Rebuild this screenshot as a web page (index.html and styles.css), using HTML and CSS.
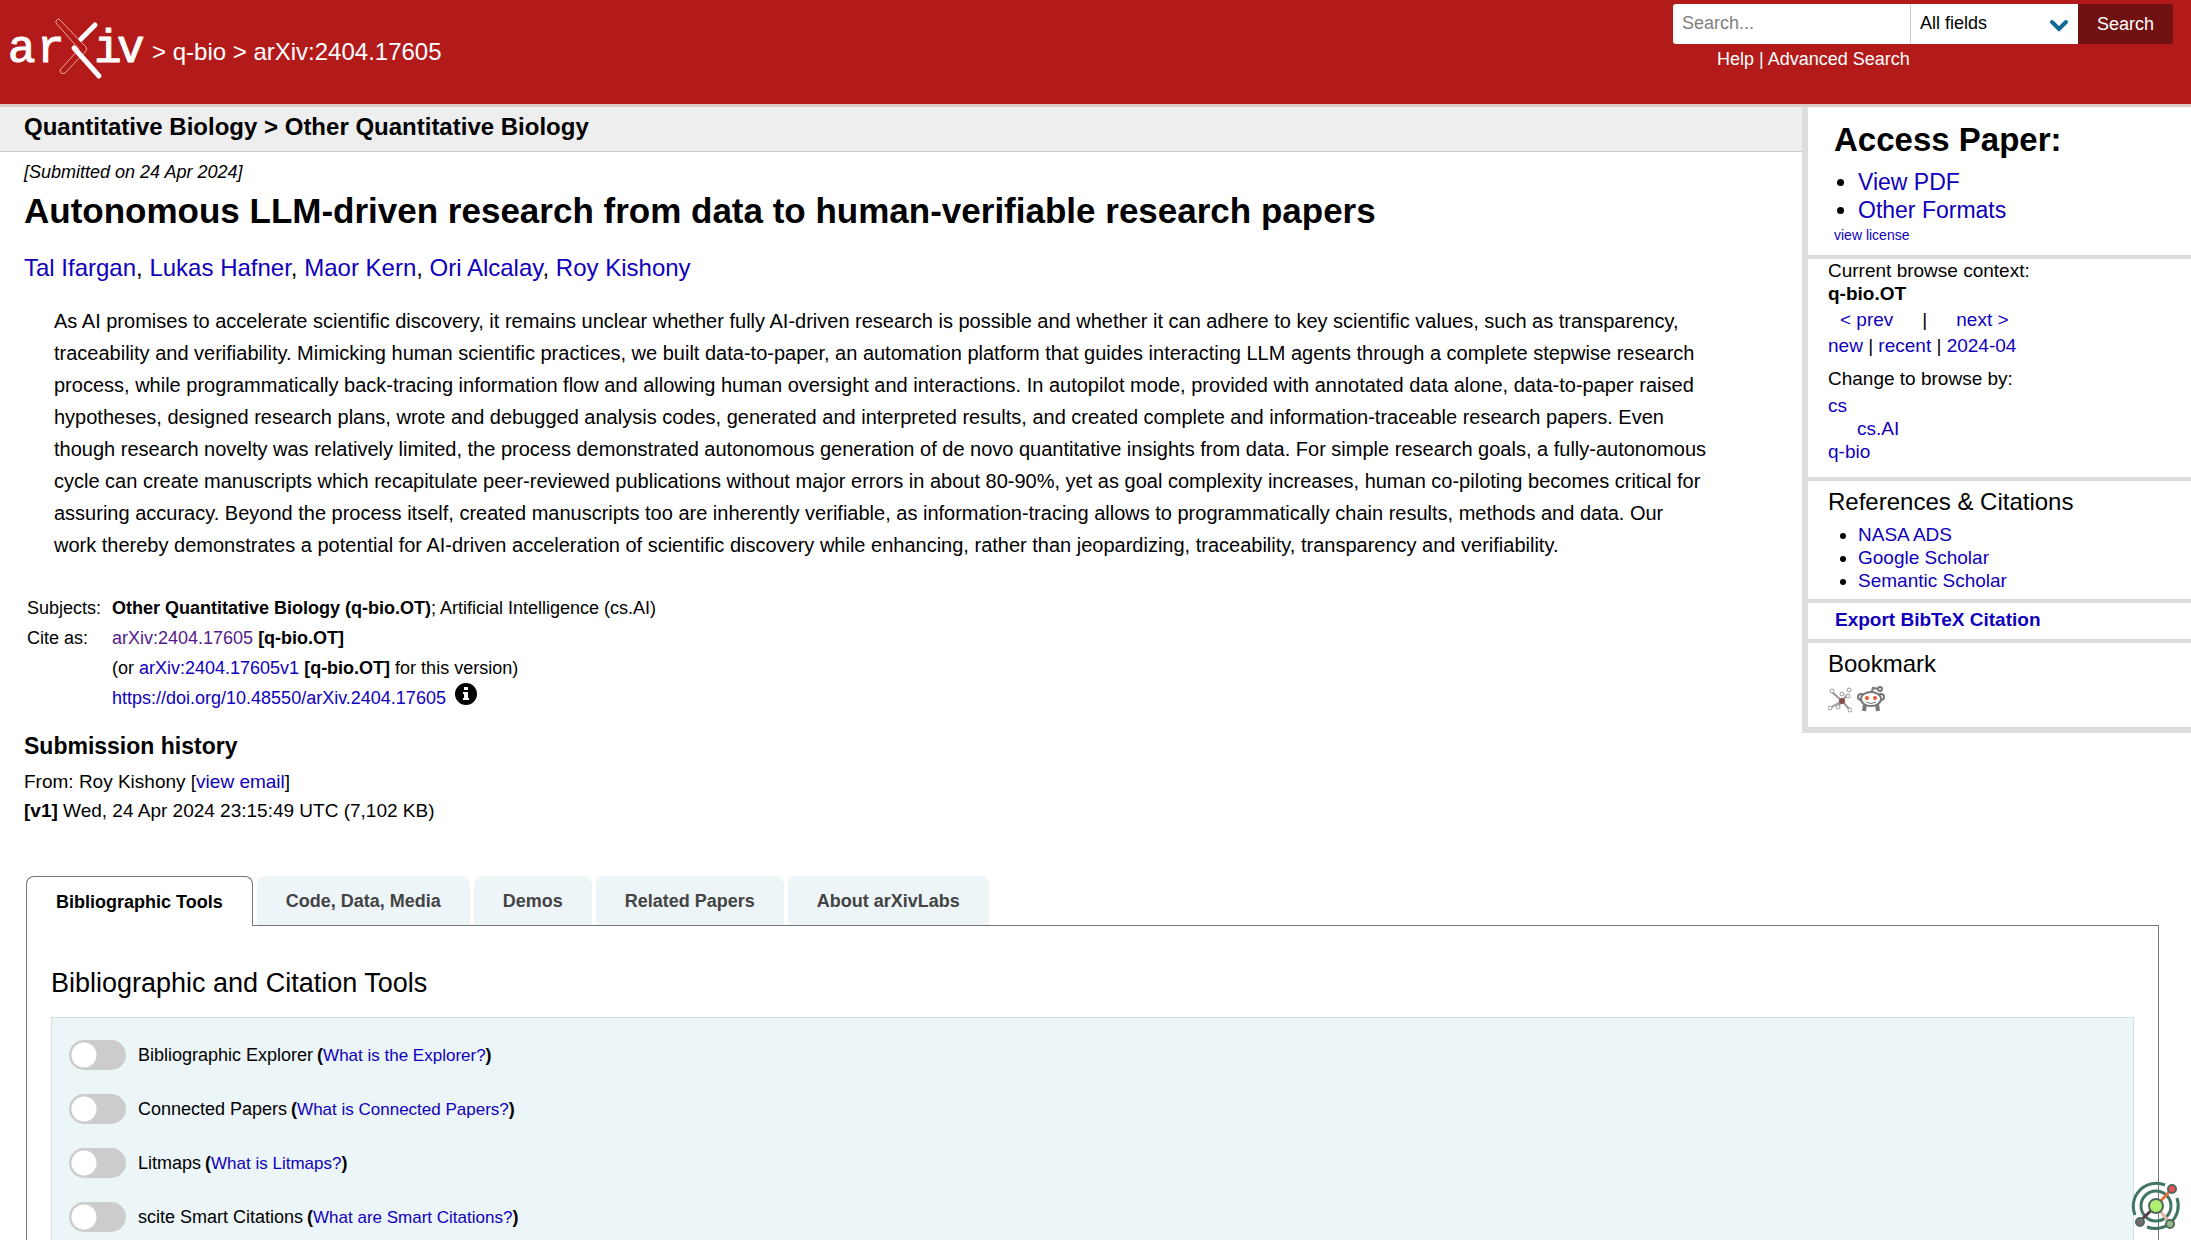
FILE: index.html
```html
<!DOCTYPE html>
<html lang="en">
<head>
<meta charset="utf-8">
<meta name="viewport" content="width=device-width, initial-scale=1">
<title>[2404.17605] Autonomous LLM-driven research from data to human-verifiable research papers</title>
<link rel="stylesheet" href="styles.css">
</head>
<body>
<header class="site-header">
  <div class="crumbs">
    <a class="logo" href="#" aria-label="arXiv home">
      <svg width="140" height="64" viewBox="0 0 140 64" aria-hidden="true">
        <g class="logo-text"><text x="0 29" y="44">ar</text><text x="86 109" y="44">iv</text></g>
        <path d="M48 3 Q49 1 51 1 L78 29 Q79 31 78 33 L57 55 Q52 57 52 52 L71 31 L48 5 Z" fill="#b31b1b" stroke="#f3a598" stroke-width="1"/>
        <path d="M87 7 L73 21 M66 30 L91 58" fill="none" stroke="#fff" stroke-width="5" stroke-linecap="round"/>
      </svg>
    </a>
    <nav class="trail"><span>&gt;</span> <a href="#">q-bio</a> <span>&gt;</span> <a href="#">arXiv:2404.17605</a></nav>
  </div>
  <form class="search">
    <div class="search-row">
      <input class="search-input" type="text" placeholder="Search..." aria-label="Search term">
      <div class="search-field">
        <select aria-label="Field to search"><option>All fields</option></select>
        <svg class="chevron" width="20" height="13" viewBox="0 0 20 13" aria-hidden="true"><path d="M3 3 L10 10 L17 3" fill="none" stroke="#0f6a94" stroke-width="4" stroke-linecap="round"/></svg>
      </div>
      <button class="search-button" type="submit">Search</button>
    </div>
    <p class="search-help"><a href="#">Help</a> | <a href="#">Advanced Search</a></p>
  </form>
</header>

<div class="layout">
  <main class="paper">
    <div class="subject-bar">Quantitative Biology &gt; Other Quantitative Biology</div>
    <div class="paper-body">
      <p class="dateline">[Submitted on 24 Apr 2024]</p>
      <h1 class="title">Autonomous LLM-driven research from data to human-verifiable research papers</h1>
      <p class="authors"><a href="#">Tal Ifargan</a>, <a href="#">Lukas Hafner</a>, <a href="#">Maor Kern</a>, <a href="#">Ori Alcalay</a>, <a href="#">Roy Kishony</a></p>
      <blockquote class="abstract">As AI promises to accelerate scientific discovery, it remains unclear whether fully AI-driven research is possible and whether it can adhere to key scientific values, such as transparency, traceability and verifiability. Mimicking human scientific practices, we built data-to-paper, an automation platform that guides interacting LLM agents through a complete stepwise research process, while programmatically back-tracing information flow and allowing human oversight and interactions. In autopilot mode, provided with annotated data alone, data-to-paper raised hypotheses, designed research plans, wrote and debugged analysis codes, generated and interpreted results, and created complete and information-traceable research papers. Even though research novelty was relatively limited, the process demonstrated autonomous generation of de novo quantitative insights from data. For simple research goals, a fully-autonomous cycle can create manuscripts which recapitulate peer-reviewed publications without major errors in about 80-90%, yet as goal complexity increases, human co-piloting becomes critical for assuring accuracy. Beyond the process itself, created manuscripts too are inherently verifiable, as information-tracing allows to programmatically chain results, methods and data. Our work thereby demonstrates a potential for AI-driven acceleration of scientific discovery while enhancing, rather than jeopardizing, traceability, transparency and verifiability.</blockquote>
      <table class="meta">
        <tr><th scope="row">Subjects:</th><td><b>Other Quantitative Biology (q-bio.OT)</b>; Artificial Intelligence (cs.AI)</td></tr>
        <tr><th scope="row">Cite as:</th><td><a class="visited" href="#">arXiv:2404.17605</a> <b>[q-bio.OT]</b></td></tr>
        <tr><th></th><td>(or <a href="#">arXiv:2404.17605v1</a> <b>[q-bio.OT]</b> for this version)</td></tr>
        <tr><th></th><td><span class="doi"><a href="#">https://doi.org/10.48550/arXiv.2404.17605</a>
          <svg width="22" height="22" viewBox="0 0 22 22" role="img" aria-label="Focus to learn more"><circle cx="11" cy="11" r="11" fill="#000"/><path d="M9 4h4v3H9zM8 9h5v6h1v2H8v-2h1v-4H8z" fill="#fff"/></svg></span></td></tr>
      </table>
      <h2 class="history-title">Submission history</h2>
      <p class="history">From: Roy Kishony [<a href="#">view email</a>]<br><b>[v1]</b> Wed, 24 Apr 2024 23:15:49 UTC (7,102 KB)</p>
    </div>
  </main>

  <aside class="sidebar">
    <section class="access">
      <h2>Access Paper:</h2>
      <ul>
        <li><a href="#">View PDF</a></li>
        <li><a href="#">Other Formats</a></li>
      </ul>
      <a class="license" href="#">view license</a>
    </section>
    <section class="browse">
      <div>Current browse context:</div>
      <div><b>q-bio.OT</b></div>
      <div class="prevnext"><a href="#">&lt; prev</a><span>|</span><a href="#">next &gt;</a></div>
      <div class="list-links"><a href="#">new</a> | <a href="#">recent</a> | <a href="#">2024-04</a></div>
      <div class="change">Change to browse by:</div>
      <div><a href="#">cs</a></div>
      <div class="sub"><a href="#">cs.AI</a></div>
      <div><a href="#">q-bio</a></div>
    </section>
    <section class="refs">
      <h3>References &amp; Citations</h3>
      <ul>
        <li><a href="#">NASA ADS</a></li>
        <li><a href="#">Google Scholar</a></li>
        <li><a href="#">Semantic Scholar</a></li>
      </ul>
    </section>
    <section class="export"><button type="button">Export BibTeX Citation</button></section>
    <section class="bookmark">
      <h3>Bookmark</h3>
      <div class="bookmark-icons">
        <a href="#" aria-label="Bookmark on BibSonomy">
          <svg width="24" height="28" viewBox="0 0 24 28"><g fill="none" stroke="#999" stroke-width="2"><path d="M4 7 L14 16 L22 25 M2 23 L14 16 L19 10 M14 16 L10 22"/><g fill="#fff" stroke-width="1"><circle cx="4" cy="6" r="2"/><circle cx="22" cy="25" r="2"/><circle cx="2" cy="23" r="2"/><circle cx="10" cy="22" r="2"/><circle cx="14" cy="9" r="2"/><circle cx="21" cy="5" r="2"/><circle cx="20" cy="11" r="2"/></g></g><circle cx="14" cy="16" r="3" fill="#8a4a4a"/></svg>
        </a>
        <a href="#" aria-label="Bookmark on Reddit">
          <svg width="28" height="28" viewBox="0 0 28 28"><g fill="#fff" stroke="#777" stroke-width="2"><path d="M14 9 L16 3 L22 4" fill="none"/><circle cx="23" cy="4" r="2"/><circle cx="4" cy="12" r="3"/><circle cx="24" cy="12" r="3"/><path d="M8 19 L7 26 M20 19 L21 26" stroke-width="4"/><ellipse cx="14" cy="14" rx="10" ry="7"/><path d="M9 17 Q14 20 19 17" fill="none" stroke-width="1"/></g><circle cx="10" cy="13" r="2" fill="#e8592b"/><circle cx="18" cy="13" r="2" fill="#e8592b"/></svg>
        </a>
      </div>
    </section>
  </aside>
</div>

<section class="labs">
  <div class="tabs" role="tablist">
    <button class="tab active" type="button" role="tab" aria-selected="true">Bibliographic Tools</button>
    <button class="tab" type="button" role="tab">Code, Data, Media</button>
    <button class="tab" type="button" role="tab">Demos</button>
    <button class="tab" type="button" role="tab">Related Papers</button>
    <button class="tab" type="button" role="tab">About arXivLabs</button>
  </div>
  <div class="panel">
    <h2>Bibliographic and Citation Tools</h2>
    <div class="tools">
      <div class="tool"><input type="checkbox" id="explorer"><label for="explorer">Bibliographic Explorer</label><span class="about">(<a href="#">What is the Explorer?</a>)</span></div>
      <div class="tool"><input type="checkbox" id="connected"><label for="connected">Connected Papers</label><span class="about">(<a href="#">What is Connected Papers?</a>)</span></div>
      <div class="tool"><input type="checkbox" id="litmaps"><label for="litmaps">Litmaps</label><span class="about">(<a href="#">What is Litmaps?</a>)</span></div>
      <div class="tool"><input type="checkbox" id="scite"><label for="scite">scite Smart Citations</label><span class="about">(<a href="#">What are Smart Citations?</a>)</span></div>
    </div>
  </div>
</section>

<button class="float-button" type="button" aria-label="Open research assistant">
  <svg width="50" height="50" viewBox="0 0 50 50"><g fill="none" stroke="#3f7564" stroke-width="3"><path d="M4 34 A23 23 0 0 1 34 4"/><path d="M46 17 A23 23 0 0 1 16 46"/><circle cx="25" cy="25" r="15"/></g><path d="M25 25 L39 10" stroke="#e8713a" stroke-width="3"/><path d="M25 25 L9 40" stroke="#5d3549" stroke-width="3"/><path d="M25 25 L38 41" stroke="#e5b7a8" stroke-width="3"/><g stroke="#4c6a5c" stroke-width="2"><circle cx="25" cy="25" r="7" fill="#b3ee72"/><circle cx="41" cy="8" r="4" fill="#ee4f58"/><circle cx="9" cy="41" r="4" fill="#7b6872"/><circle cx="39" cy="43" r="4" fill="#9fb98d"/></g></svg>
</button>
</body>
</html>
```
FILE: styles.css
```css
* { box-sizing: border-box; }
html { height: 100%; overflow: hidden; }
body {
  height: 100%;
  margin: 0;
  overflow: hidden;
  background: #fff;
  color: #000;
  font: 20px/24px "Liberation Sans", Arial, sans-serif;
}
a { color: #1000bc; text-decoration: none; }
h1, h2, h3, p, ul { margin: 0; padding: 0; }
button, input, select { font: inherit; }

.site-header {
  display: flex;
  justify-content: space-between;
  height: 107px;
  padding: 4px 18px 0 8px;
  background: #b31b1b;
  border-bottom: 3px solid #dccbc8;
  color: #fff;
}
.site-header a { color: #fff; }
.crumbs { display: flex; align-items: flex-start; gap: 4px; padding-top: 14px; }
.logo, .logo svg { display: block; }
.logo svg { overflow: visible; }
.logo-text {
  font: 46px "Liberation Mono", monospace;
  fill: #fff;
  stroke: #fff;
  stroke-width: 1px;
  stroke-linejoin: round;
}
.trail { padding-top: 20px; font-size: 24px; line-height: 28px; }

.search { width: 500px; font-size: 18px; }
.search-row { display: flex; height: 40px; }
.search-input {
  flex: 1;
  min-width: 0;
  padding: 0 9px 2px;
  border: 0;
  border-radius: 3px 0 0 3px;
  background: #fff;
}
.search-input::placeholder { color: #808080; }
.search-field { position: relative; width: 168px; border-left: 1px solid #ccc; }
.search-field select {
  width: 100%;
  height: 100%;
  padding: 0 9px 2px;
  border: 0;
  border-radius: 0;
  background: #fff;
  color: #000;
  appearance: none;
}
.chevron { position: absolute; right: 9px; top: 15px; pointer-events: none; }
.search-button {
  width: 95px;
  border: 0;
  border-radius: 0 3px 3px 0;
  background: #701112;
  color: #fff;
}
.search-help { padding: 3px 0 0 44px; }

.layout { display: flex; align-items: flex-start; }
.paper { flex: 1; min-width: 0; padding-bottom: 51px; }
.subject-bar {
  padding: 6px 24px 10px;
  border-bottom: 1px solid #ccc;
  background: #eee;
  font-size: 24px;
  line-height: 28px;
  font-weight: bold;
}
.paper-body { padding: 8px 24px 0; }
.dateline { font-size: 18px; font-style: italic; }
.title { margin-top: 7px; font-size: 35px; line-height: 40px; }
.authors { margin-top: 23px; font-size: 24px; line-height: 28px; }
.abstract { margin: 23px 67px 0 30px; line-height: 32px; }
.meta { margin-top: 32px; border-collapse: collapse; font-size: 18px; line-height: 30px; }
.meta th { width: 88px; padding: 0 0 0 3px; font-weight: normal; text-align: left; }
.meta td { padding: 0; }
.meta .visited { color: #551a8b; }
.doi { display: flex; align-items: flex-start; gap: 9px; }
.history-title { margin-top: 19px; font-size: 23px; line-height: 28px; }
.history { margin-top: 7px; font-size: 19px; line-height: 29px; }

.sidebar {
  width: 389px;
  border-left: 6px solid #ddd;
  border-bottom: 6px solid #ddd;
  font-size: 19px;
  line-height: 23px;
}
.sidebar section { padding-left: 20px; }
.sidebar section + section { border-top: 4px solid #ddd; }
.sidebar h3 { font-size: 24px; line-height: 28px; font-weight: normal; }
.sidebar .access { height: 148px; padding: 13px 0 0 26px; }
.access h2 { font-size: 33px; line-height: 40px; }
.access ul { padding: 8px 0 0 24px; font-size: 23px; line-height: 28px; }
.license { display: block; font-size: 14px; line-height: 22px; }
.browse { height: 222px; }
.prevnext { display: flex; gap: 29px; padding: 3px 0 0 12px; }
.list-links { padding-top: 3px; }
.change { padding: 10px 0 4px; }
.sub { padding-left: 29px; }
.refs { height: 122px; padding-top: 7px; }
.refs ul { padding: 7px 0 0 30px; }
.export { height: 40px; }
.export button {
  display: block;
  padding: 5px 0 0 7px;
  border: 0;
  background: none;
  color: #1000bc;
  font-weight: bold;
}
.bookmark { height: 88px; padding-top: 7px; }
.bookmark-icons { display: flex; gap: 5px; padding-top: 7px; }
.bookmark-icons svg { display: block; }

.labs { padding: 0 32px 0 26px; }
.tabs { display: flex; gap: 4px; }
.tab {
  height: 49px;
  padding: 0 29px;
  border: 0;
  border-radius: 8px 8px 0 0;
  background: #edf5f8;
  color: #444;
  font-size: 18px;
  font-weight: bold;
}
.tab.active {
  z-index: 1;
  height: 50px;
  margin-bottom: -1px;
  border: 1px solid #777;
  border-bottom: 0;
  background: #fff;
  color: #000;
}
.panel { padding: 41px 24px 0; border: 1px solid #777; }
.panel h2 { font-size: 27px; line-height: 32px; font-weight: normal; }
.tools {
  display: grid;
  gap: 24px;
  margin-top: 18px;
  padding: 22px 17px 40px;
  border: 1px solid #d3dfe2;
  background: #ecf5f8;
}
.tool { display: flex; align-items: center; height: 30px; font-size: 18px; }
.tool input {
  width: 57px;
  height: 30px;
  margin: 0 12px 0 0;
  border-radius: 15px;
  background: radial-gradient(circle at 15px 15px, #fff 12px, #ccc 13px);
  appearance: none;
}
.about { margin-left: 4px; font-weight: bold; }
.about a { font-size: 17px; font-weight: normal; }

.float-button {
  position: fixed;
  right: 10px;
  bottom: 9px;
  padding: 0;
  border: 0;
  background: none;
}
.float-button svg { display: block; }
```
